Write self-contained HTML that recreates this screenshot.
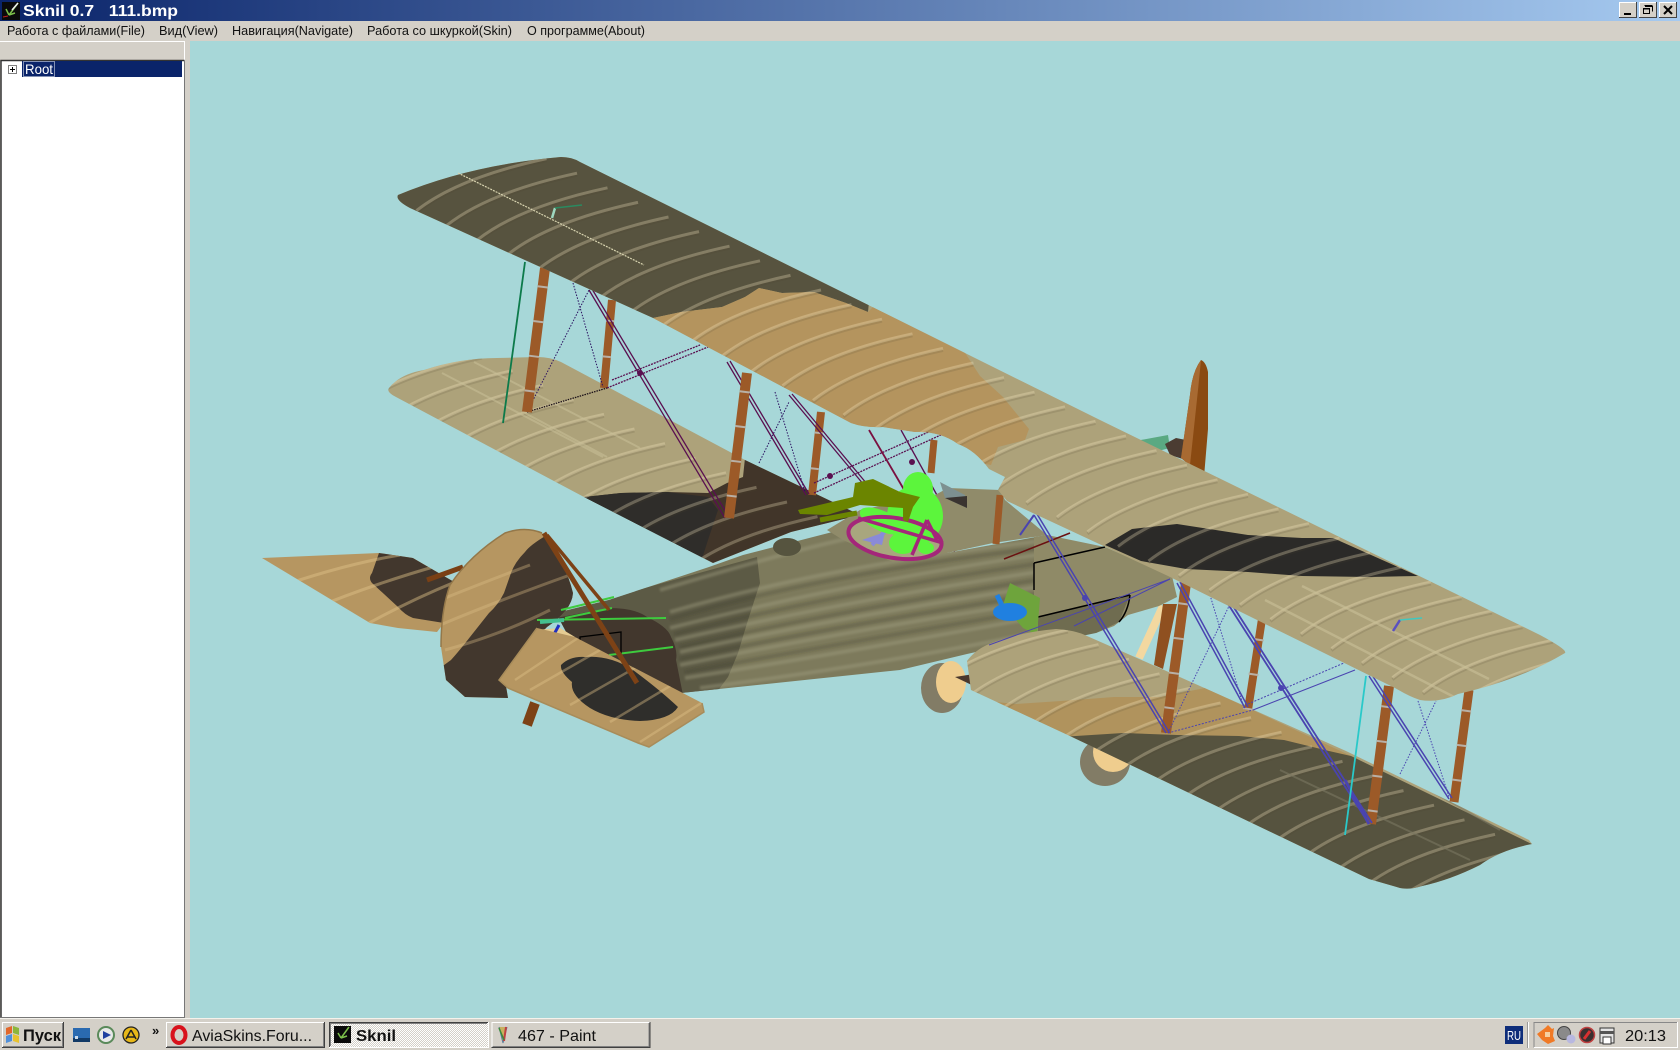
<!DOCTYPE html>
<html><head><meta charset="utf-8"><title>Sknil</title>
<style>
html,body{margin:0;padding:0;width:1680px;height:1050px;overflow:hidden;background:#d4d0c8}
svg{display:block}
text{font-family:"Liberation Sans","Noto Sans CJK SC",sans-serif}
</style></head><body>
<svg xmlns="http://www.w3.org/2000/svg" width="1680" height="1050" viewBox="0 0 1680 1050">
<defs>
<linearGradient id="tb" x1="0" x2="1" y1="0" y2="0"><stop offset="0" stop-color="#0a246a"/><stop offset="1" stop-color="#a6caf0"/></linearGradient>
<pattern id="dith" width="2" height="2" patternUnits="userSpaceOnUse"><rect width="2" height="2" fill="#d4d0c8"/><rect width="1" height="1" fill="#fff"/><rect x="1" y="1" width="1" height="1" fill="#fff"/></pattern>
<filter id="soft" x="-5%" y="-5%" width="110%" height="110%"><feGaussianBlur stdDeviation="1"/></filter>
<path id="r" fill="none" d="M0 0Q42 -33 130 -52"/>
<g id="r4"><use href="#r"/><use href="#r" x="30.5" y="14.6"/><use href="#r" x="61" y="29.2"/><use href="#r" x="91.5" y="43.8"/></g>
<g id="r16"><use href="#r4"/><use href="#r4" x="122" y="58.4"/><use href="#r4" x="244" y="116.8"/><use href="#r4" x="366" y="175.2"/></g>
<g id="r20"><use href="#r16"/><use href="#r4" x="488" y="233.6"/></g>
<g id="r32"><use href="#r16"/><use href="#r16" x="488" y="233.6"/></g>
<clipPath id="ct"><path d="M398 195Q470 165 561 157Q572 157 580 162L1100 420L1540 635Q1568 650 1565 653Q1520 680 1458 694Q1440 703 1420 700Q1410 697 1395 688L1168 576L1007 501L998 490L1005 477L989 469Q975 450 958 444Q940 431 915 432L883 427Q865 428 851 423L653 318L410 208Q395 200 398 195Z"/></clipPath>
<clipPath id="cl"><path d="M389 388Q400 374 424 370Q460 358 497 358L538 357Q550 357 561 362L745 460L860 515L791 532L713 563L584 497L396 397Q386 392 389 388Z"/></clipPath>
<clipPath id="cr"><path d="M967 661Q975 650 989 644Q1020 632 1056 629Q1075 630 1087 636L1137 658L1346 751L1529 840L1532 844Q1500 850 1480 865Q1450 880 1422 886Q1410 890 1400 888L1369 879L1070 736L971 690Z"/></clipPath>
<clipPath id="cf"><path d="M556 613L609 600L709 567L743 555L848 528L880 555L947 553L1047 535L1060 540L1079 629L967 654L900 670L681 693L600 695Z"/></clipPath>
<clipPath id="crd"><path d="M441 647Q441 610 450 585Q470 555 505 533Q525 526 542 533Q565 560 573 593Q572 610 547 627L520 655L505 680L508 698L465 697L446 680Z"/></clipPath>
<clipPath id="cls"><path d="M262 558L379 553L413 558L456 583L444 623L437 632L398 628L370 623Z"/></clipPath>
<clipPath id="crs"><path d="M537 628L575 637L702 703L704 712L649 747L638 743L508 688L499 680Z"/></clipPath>
</defs>

<!-- window chrome -->
<rect width="1680" height="1050" fill="#d4d0c8"/>
<rect width="1680" height="21" fill="url(#tb)"/>
<rect x="190" y="41" width="1490" height="977" fill="#a7d7d8"/>

<!-- title icon -->
<rect x="2" y="2" width="18" height="18" fill="#0a0a0a"/>
<path d="M18 3L9 15M6 9L9 15M9 15L15 13" stroke="#7cc04a" stroke-width="1.5" fill="none"/><path d="M18 3L12 10" stroke="#eee" stroke-width="1.5"/><path d="M3 17L8 16" stroke="#c02020" stroke-width="1"/>
<text x="23" y="16" font-size="16" font-weight="700" fill="#fff" textLength="155" lengthAdjust="spacingAndGlyphs" xml:space="preserve">Sknil 0.7   111.bmp</text>

<!-- window buttons -->
<g>
<g id="wb"><rect x="1619" y="2" width="18" height="16" fill="#d4d0c8"/><path d="M1619.5 17V2.5H1636" stroke="#fff" fill="none"/><path d="M1619 17.5H1636.5V2" stroke="#444" fill="none"/></g>
<use href="#wb" x="20"/><use href="#wb" x="40"/>
<rect x="1624" y="13" width="7" height="2" fill="#000"/>
<path d="M1645 6.5h7.5v5M1644.5 5.5h8" stroke="#000" fill="none"/><rect x="1643.5" y="8.5" width="6" height="5" fill="none" stroke="#000"/><path d="M1643 9H1650" stroke="#000"/>
<path d="M1664 6L1672 14M1672 6L1664 14" stroke="#000" stroke-width="2"/>
</g>

<!-- menu -->
<g font-size="13" fill="#111">
<text x="7" y="35" textLength="138" lengthAdjust="spacingAndGlyphs">Работа с файлами(File)</text>
<text x="159" y="35" textLength="59" lengthAdjust="spacingAndGlyphs">Вид(View)</text>
<text x="232" y="35" textLength="121" lengthAdjust="spacingAndGlyphs">Навигация(Navigate)</text>
<text x="367" y="35" textLength="145" lengthAdjust="spacingAndGlyphs">Работа со шкуркой(Skin)</text>
<text x="527" y="35" textLength="118" lengthAdjust="spacingAndGlyphs">О программе(About)</text>
</g>

<!-- left panel -->
<path d="M0 41.5H184.5V60" stroke="#fff" fill="none"/>
<rect x="1" y="60" width="183" height="957" fill="#fff"/>
<path d="M1 1017V60.5H184.5" stroke="#333" stroke-width="1.5" fill="none"/>
<path d="M0 1017.5H184.5V61" stroke="#777" fill="none" stroke-width="1"/>
<rect x="22" y="61" width="160" height="16" fill="#0a246a"/>
<rect x="8.5" y="65.5" width="8" height="8" fill="#fff" stroke="#808080"/><path d="M10 69.5H15M12.5 67V72" stroke="#000"/>
<rect x="23.5" y="61.5" width="31" height="15" fill="none" stroke="#fff" stroke-dasharray="1 1"/>
<text x="25" y="74" font-size="14" fill="#fff" textLength="28" lengthAdjust="spacingAndGlyphs">Root</text>

<!-- left lower wing -->
<g clip-path="url(#cl)">
<rect x="370" y="340" width="520" height="240" fill="#ada27a"/>
<path d="M584 497L621 493L667 492L708 493L727 483L743 477L745 458L870 510L790 540L713 570Z" fill="#413529"/>
<path d="M584 497L621 493L667 492L708 497L718 510L708 540L700 565L713 570Z" fill="#2f2d2a"/>
<use href="#r16" x="352" y="410" stroke="#4a4030" stroke-opacity=".15" stroke-width="3"/>
<use href="#r4" x="840" y="643.6" stroke="#4a4030" stroke-opacity=".15" stroke-width="3"/>
<use href="#r16" x="352" y="408" stroke="#fff0c8" stroke-opacity=".28" stroke-width="3"/>
<use href="#r4" x="840" y="641.6" stroke="#fff0c8" stroke-opacity=".2" stroke-width="3"/>
<path d="M442 373L603 457M474 362L640 448M525 413L607 457" stroke="#c9bf98" stroke-opacity=".55" stroke-width="2" fill="none"/>
</g>

<!-- left struts back -->
<g fill="none">
<path d="M612 300L604 388" stroke="#9c5a28" stroke-width="8"/>
<path d="M821 412L812 495" stroke="#9c5a28" stroke-width="8"/>
<path d="M934 440L931 473" stroke="#9c5a28" stroke-width="7"/>
<path d="M612 300L604 388M821 412L812 495" stroke="#b8b0a6" stroke-width="8" stroke-dasharray="2 34" stroke-dashoffset="-20"/>
</g>
<!-- left wires -->
<g fill="none" stroke="#5a1050" stroke-width="1.3">
<path d="M589 290L725 518M592 289L729 517"/>
<path d="M727 362L806 495M730 361L809 494"/>
<path d="M789 395L874 497M792 394L877 496"/>
<path d="M607 388L713 345M612 380L700 345" stroke-dasharray="2 1"/>
<path d="M814 493L956 428M814 483L933 430" stroke-dasharray="2 1"/>
<path d="M527 412L607 388" stroke="#1a1018" stroke-dasharray="1.5 1"/>
<path d="M527 412L589 290M573 283L603 387M759 463L789 402M775 392L805 492" stroke-width="1" stroke-dasharray="1.5 1.5" stroke="#2a1060"/>
<path d="M869 430L906 493" stroke="#7a1040" stroke-width="1.8"/>
<path d="M901 430L938 497"/>
<path d="M920 500L940 530L960 560"/>
</g>
<circle cx="640" cy="373" r="3" fill="#5a1050"/><circle cx="830" cy="476" r="3" fill="#5a1050"/><circle cx="912" cy="462" r="3" fill="#5a1050"/>
<g fill="none">
<path d="M545 268L527 412" stroke="#9c5a28" stroke-width="10"/>
<path d="M747 373L729 518" stroke="#9c5a28" stroke-width="10"/>
<path d="M545 268L527 412M747 373L729 518" stroke="#b8b0a6" stroke-width="10" stroke-dasharray="2 33" stroke-dashoffset="-18"/>
<path d="M525 262L503 423" stroke="#0c7a4a" stroke-width="1.8"/>
</g>

<!-- propeller / engine -->
<path d="M1130 442L1168 435L1170 448L1150 453Z" fill="#5aa982"/>
<path d="M1165 444L1176 438L1186 440L1186 460L1170 455Z" fill="#4b3c32"/>
<path d="M1201 360Q1192 372 1190 395L1181 458L1204 477L1208 429L1208 372Q1206 362 1201 360Z" fill="#8a4a12"/>
<path d="M1201 360Q1192 372 1190 395L1181 458L1190 465L1198 390Z" fill="#a86a32"/>

<!-- gear -->
<path d="M1163 606L1139 658" stroke="#f3d8a0" stroke-width="8"/>
<path d="M1163 604L1154 665L1163 669L1177 604Z" fill="#8f5020"/>

<!-- wheels -->
<ellipse cx="942" cy="688" rx="21" ry="25" fill="#827c66"/>
<ellipse cx="951" cy="682" rx="15" ry="21" fill="#efcd8e"/>
<path d="M955 677L980 673L978 688Z" fill="#4a382c"/>
<ellipse cx="1105" cy="762" rx="25" ry="24" fill="#827c66"/>
<ellipse cx="1113" cy="752" rx="20" ry="20" fill="#efcd8e"/>

<!-- left stab -->
<g clip-path="url(#cls)">
<rect x="255" y="545" width="210" height="95" fill="#b69661"/>
<path d="M379 553Q400 552 413 558L456 583L444 623L413 618Q405 615 398 607L372 583Q368 578 372 573Z" fill="#42372d"/>
<path d="M270 590Q340 565 400 555M310 610Q370 585 440 565M360 628Q410 600 460 580" stroke="#e0c48a" stroke-opacity=".45" stroke-width="3" fill="none"/>
</g>
<path d="M463 567L427 580" stroke="#7a4015" stroke-width="5"/>

<!-- fuselage -->
<g clip-path="url(#cf)">
<rect x="540" y="520" width="560" height="190" fill="#7d7a5c"/>
<path d="M540 600L609 598L757 557L760 583L748 620L738 653L728 677L714 696L540 700Z" fill="#5c5a45"/>
<g fill="none" filter="url(#soft)">
<g stroke="#a3a183" stroke-opacity=".4" stroke-width="4">
<path d="M660 590Q800 548 860 536"/><path d="M670 612Q830 565 1050 540"/><path d="M670 628Q850 582 1050 553"/><path d="M675 640Q850 600 1050 570"/><path d="M680 652Q850 615 1050 585"/><path d="M680 665Q850 630 1050 600"/><path d="M685 678Q860 650 1050 615"/><path d="M700 688Q880 665 1050 630"/>
</g>
<g stroke="#3a382a" stroke-opacity=".22" stroke-width="4">
<path d="M670 619Q830 572 1050 547"/><path d="M675 634Q850 590 1050 562"/><path d="M680 647Q850 608 1050 578"/><path d="M680 659Q850 623 1050 593"/><path d="M685 672Q860 640 1050 608"/>
</g>
</g>
<path d="M545 620L609 608Q635 608 647 617Q668 627 671 637Q678 650 676 660L683 695L540 700Z" fill="#42372d"/>
</g>
<!-- cockpit deck / nose -->
<path d="M827 530L860 510L935 495L948 488L1000 490L1005 500L1047 535L993 543L947 553L893 562L843 540Z" fill="#908b6a"/>
<path d="M1034 537L1047 535L1105 547L1172 576L1177 597L1159 606L1128 615L1114 626L1096 633L1079 629L1034 640Z" fill="#8f8a67"/>
<path d="M1038 617L1130 595L1119 622L1096 633L1038 645Z" fill="#6f6c50"/>
<path d="M1034 563L1105 547M1034 563V590M1038 617L1130 595M1130 595Q1128 612 1119 622" stroke="#000" stroke-width="1.5" fill="none"/>
<path d="M1004 559L1070 533" stroke="#6a1010" stroke-width="1.5"/>
<ellipse cx="787" cy="547" rx="14" ry="9" fill="#56543f"/>

<!-- blue/green markers -->
<path d="M1010 583L1040 598L1037 635L1023 628L1003 605Z" fill="#6ea43c"/>
<path d="M997 595L1005 612" stroke="#2080e0" stroke-width="5"/>
<ellipse cx="1010" cy="612" rx="17" ry="9" fill="#2080e0"/>

<!-- rudder -->
<g clip-path="url(#crd)">
<rect x="435" y="525" width="145" height="180" fill="#b69661"/>
<path d="M547 535Q530 545 525 552Q515 562 511 573L504 593Q498 605 489 613L470 637Q460 650 451 660L440 668V700H520L580 600L560 535Z" fill="#42372d"/>
<path d="M440 625Q500 600 570 575M440 600Q490 580 530 565M445 650Q500 635 550 610" stroke="#e0c48a" stroke-opacity=".35" stroke-width="3" fill="none"/>
</g>
<path d="M441 647Q441 610 450 585Q470 555 505 533Q525 526 542 533" stroke="#94784a" stroke-width="1.5" fill="none"/>

<!-- tail green lines, box -->
<g fill="none">
<path d="M561 610L614 597M565 618L612 608" stroke="#3ecb3e" stroke-width="2"/>
<path d="M537 620L666 618" stroke="#3ecb3e" stroke-width="2"/>
<path d="M540 622L564 620" stroke="#44c090" stroke-width="4"/>
<path d="M609 655L673 647" stroke="#3ecb3e" stroke-width="2"/>
<path d="M580 641V637L621 632V660" stroke="#000" stroke-width="1.3"/>
</g>
<path d="M535 630L560 628L575 637L545 645Z" fill="#e6cc92"/>
<path d="M559 625L551 640" stroke="#2030c0" stroke-width="3"/>

<!-- right stab -->
<g clip-path="url(#crs)">
<rect x="490" y="620" width="220" height="130" fill="#b69661"/>
<path d="M585 657Q610 655 633 670Q660 690 678 707Q670 720 640 721Q610 720 590 708Q570 695 572 682Q560 672 561 665Q570 656 585 657Z" fill="#2f2e2b"/>
<path d="M515 680L578 638M530 690L600 650M570 705L640 665M610 722L680 680M640 742L706 700" stroke="#e0c48a" stroke-opacity=".4" stroke-width="2.5" fill="none"/>
</g>
<path d="M537 628L499 680L508 688L638 743L649 747L704 712L702 703" stroke="#a88c5a" stroke-width="1.5" fill="none"/>
<path d="M544 533L637 683" stroke="#7d4216" stroke-width="5"/>
<path d="M547 535L609 610" stroke="#7d4216" stroke-width="3.5"/>
<path d="M535 703L527 725" stroke="#7d4216" stroke-width="10"/>

<!-- pilot & gun -->
<ellipse cx="895" cy="538" rx="47" ry="20" transform="rotate(9 895 538)" fill="#a8a67e"/>
<path d="M862 540L885 532L882 545Z" fill="#8a8ad8"/>
<path d="M872 545L888 528" stroke="#8a8ad8" stroke-width="4"/>
<ellipse cx="918" cy="489" rx="15" ry="17" fill="#5cf53c"/>
<ellipse cx="915" cy="516" rx="28" ry="30" fill="#5cf53c"/>
<ellipse cx="903" cy="543" rx="14" ry="11" fill="#5cf53c"/>
<ellipse cx="882" cy="521" rx="24" ry="10" fill="#5cf53c" transform="rotate(25 882 521)"/>
<ellipse cx="926" cy="548" rx="8" ry="6" fill="#5cf53c"/>
<ellipse cx="895" cy="538" rx="47" ry="20" transform="rotate(9 895 538)" fill="none" stroke="#a4267a" stroke-width="4"/>
<path d="M858 518L943 543M927 520L912 555M927 520L937 540" stroke="#a4267a" stroke-width="3.5" fill="none"/>
<path d="M798 510L853 497L855 483L873 479L900 492L920 497L913 507L908 522L903 520L903 508L860 505L827 515L800 514Z" fill="#6b8500"/>
<path d="M820 520L857 513" stroke="#6b8500" stroke-width="5"/>
<path d="M940 482L965 495L967 508L945 498Z" fill="#7d9090"/>
<path d="M945 498L967 496L967 508Z" fill="#3a3430"/>

<!-- right lower wing -->
<g clip-path="url(#cr)">
<rect x="960" y="620" width="580" height="280" fill="#ada27a"/>
<path d="M985 701L1016 704L1061 701L1114 697L1160 697L1205 688L1360 760L1060 740L990 705Z" fill="#b0935d"/>
<path d="M1060 737L1123 733L1177 735L1239 736L1284 740L1329 751L1351 756L1540 848L1480 900L1380 900Z" fill="#56533f"/>
<use href="#r20" x="938" y="684" stroke="#4a4030" stroke-opacity=".15" stroke-width="3"/>
<use href="#r20" x="938" y="682" stroke="#fff0c8" stroke-opacity=".28" stroke-width="3"/>
<path d="M1280 770L1470 860M1350 745L1500 830" stroke="#7a7660" stroke-opacity=".6" stroke-width="2" fill="none"/>
</g>

<!-- right struts -->
<g fill="none">
<path d="M1000 495L996 544" stroke="#9c5a28" stroke-width="7"/>
<path d="M1186 583L1166 733" stroke="#9c5a28" stroke-width="10"/>
<path d="M1262 619L1248 710" stroke="#9c5a28" stroke-width="8"/>
<path d="M1389 686L1371 824" stroke="#9c5a28" stroke-width="10"/>
<path d="M1469 690L1454 802" stroke="#9c5a28" stroke-width="9"/>
<path d="M1186 583L1166 733M1262 619L1248 710M1389 686L1371 824M1469 690L1454 802" stroke="#b8b0a6" stroke-width="10" stroke-dasharray="2 33" stroke-dashoffset="-20"/>
</g>
<!-- right wires -->
<g fill="none" stroke="#4a44b0" stroke-width="1.5">
<path d="M1034 515L1166 733M1037 514L1169 732"/>
<path d="M1177 583L1245 708M1180 582L1248 707"/>
<path d="M1228 604L1369 824M1231 603L1372 823" stroke-width="1.8"/>
<path d="M1345 780L1369 824" stroke-width="3"/>
<path d="M1369 676L1449 799M1372 675L1452 798"/>
<path d="M1168 733L1253 710" stroke-dasharray="2 1.5" stroke-width="1"/>
<path d="M1168 733L1230 604M1210 595L1244 708M1400 774L1436 701M1418 701L1449 797" stroke-dasharray="1.5 1.5" stroke-width="1"/>
<path d="M1253 710L1355 670" stroke-width="1"/>
<path d="M1248 704L1344 663" stroke-dasharray="2 1.5" stroke-width="1"/>
<path d="M989 645L1170 579M1074 626L1170 579" stroke-width="1"/>
<path d="M1034 515L1020 535" stroke-width="2"/>
</g>
<circle cx="1085" cy="598" r="3" fill="#4a44b0"/><circle cx="1281" cy="688" r="3" fill="#4a44b0"/>
<path d="M1366 676L1345 835" stroke="#29c9c9" stroke-width="1.8"/>

<!-- top wing -->
<g clip-path="url(#ct)">
<rect x="380" y="140" width="1200" height="580" fill="#ada27a"/>
<path d="M380 140H885L868 312L846 303L814 292L782 293L759 288L745 297L722 307L681 312L653 318L380 200Z" fill="#57533f"/>
<path d="M868 312L846 303L814 292L782 293L759 288L745 297L722 307L681 312L653 318L660 330L860 440L991 465L998 447L1025 440L1029 429L1003 397L980 376L960 345L880 300Z" fill="#b4945e"/>
<path d="M1105 545L1132 529L1177 524L1248 535L1302 538L1333 538L1418 576L1369 577L1302 576L1248 572L1186 569L1141 561Z" fill="#2b2a28"/>
<use href="#r32" x="386" y="198" stroke="#4a4030" stroke-opacity=".15" stroke-width="3"/>
<use href="#r4" x="1362" y="665" stroke="#4a4030" stroke-opacity=".15" stroke-width="3"/>
<use href="#r32" x="386" y="196" stroke="#fff0c8" stroke-opacity=".28" stroke-width="3"/>
<use href="#r4" x="1362" y="663" stroke="#fff0c8" stroke-opacity=".28" stroke-width="3"/>
<path d="M1302 586L1489 679M1265 600L1460 700" stroke="#c9bf98" stroke-opacity=".6" stroke-width="2.5" fill="none"/>
</g>
<path d="M458 173L644 265" stroke="#d8d4b0" stroke-width="1.2" stroke-dasharray="2 1"/>
<path d="M552 218L555 208" stroke="#9fd8c0" stroke-width="2.5"/><path d="M555 208L582 205" stroke="#2a8a60" stroke-width="1.5"/>
<path d="M1393 631L1400 620" stroke="#5a50c0" stroke-width="2.5"/><path d="M1400 620L1422 618" stroke="#40c8c0" stroke-width="1.5"/>

<!-- taskbar -->
<rect x="0" y="1018" width="1680" height="32" fill="#d4d0c8"/>
<path d="M0 1018.5H1680" stroke="#f4f2ec"/>
<path d="M2.5 1047V1022.5H63" stroke="#fff" fill="none"/><path d="M2 1047.5H63.5V1022" stroke="#404040" fill="none"/><path d="M3 1046.5H62.5V1023" stroke="#808080" fill="none"/>
<g><path d="M6 1028L12 1026V1033L6 1035Z" fill="#e2672a"/><path d="M13 1026L19 1028V1035L13 1033Z" fill="#8cb63c"/><path d="M6 1036L12 1034V1041L6 1043Z" fill="#4f8fd9"/><path d="M13 1034L19 1036V1043L13 1041Z" fill="#e8c22e"/></g>
<text x="23" y="1041" font-size="17" font-weight="700" fill="#111" textLength="38" lengthAdjust="spacingAndGlyphs">Пуск</text>

<rect x="73" y="1028" width="17" height="14" fill="#2a6ab0"/><rect x="73" y="1038" width="17" height="4" fill="#123a66"/><rect x="75" y="1036" width="3" height="3" fill="#cde"/>
<circle cx="106" cy="1035" r="8" fill="#e8e8e8" stroke="#5a8a5a" stroke-width="2"/><path d="M103 1031L111 1035L103 1039Z" fill="#2040a0"/>
<circle cx="131" cy="1035" r="8" fill="#e8b818" stroke="#222" stroke-width="1.3"/><path d="M131 1030L126 1039M131 1030L136 1039M127 1037H135" stroke="#222" stroke-width="1.5" fill="none"/>
<text x="152" y="1035" font-size="13" font-weight="700" fill="#111">»</text>

<g id="tbtn"><path d="M166.5 1047V1022.5H324" stroke="#fff" fill="none"/><path d="M166 1047.5H324.5V1022" stroke="#404040" fill="none"/><path d="M167 1046.5H323.5V1023" stroke="#808080" fill="none"/></g>
<ellipse cx="179" cy="1035" rx="6.5" ry="8" fill="none" stroke="#d8121c" stroke-width="4"/>
<text x="192" y="1041" font-size="16" fill="#111" textLength="120" lengthAdjust="spacingAndGlyphs">AviaSkins.Foru...</text>

<rect x="329" y="1022" width="159" height="26" fill="url(#dith)"/><path d="M329.5 1047V1022.5H488" stroke="#404040" fill="none"/><path d="M330.5 1046V1023.5H487" stroke="#808080" fill="none"/><path d="M329 1047.5H488.5V1022" stroke="#fff" fill="none"/>
<rect x="334" y="1026" width="17" height="17" fill="#0a0a0a"/><path d="M349 1027L341 1038M338 1033L341 1038M341 1038L347 1036" stroke="#7cc04a" stroke-width="1.5" fill="none"/>
<text x="356" y="1041" font-size="16" font-weight="700" fill="#111" textLength="40" lengthAdjust="spacingAndGlyphs">Sknil</text>

<use href="#tbtn" x="325.5"/>
<path d="M499 1027L503 1043L507 1027" fill="#c8b060" stroke="#5a7a9a"/><path d="M506 1027L504 1041" stroke="#c04040" stroke-width="2"/><path d="M499 1028L504 1040" stroke="#3a8a3a" stroke-width="1.5"/>
<text x="518" y="1041" font-size="16" fill="#111" textLength="78" lengthAdjust="spacingAndGlyphs">467 - Paint</text>

<!-- tray -->
<rect x="1505" y="1026" width="18" height="18" fill="#0e2d7a"/>
<text x="1507" y="1040" font-size="13" fill="#fff" textLength="14" lengthAdjust="spacingAndGlyphs">RU</text>
<path d="M1527.5 1022V1048" stroke="#999"/><path d="M1528.5 1022V1048" stroke="#fff"/>
<path d="M1534 1047.5V1022.5H1677" stroke="#888" fill="none"/><path d="M1534 1047.5H1677.5V1022" stroke="#fff" fill="none"/>
<path d="M1537 1034L1545 1028L1548 1025L1552 1029L1554 1028L1553 1036L1555 1041L1548 1044L1542 1040Z" fill="#f07a26"/><rect x="1545" y="1032" width="5" height="5" fill="#f6d0a0"/>
<circle cx="1564" cy="1033" r="6.5" fill="#8a8a8a" stroke="#444"/><circle cx="1571" cy="1039" r="4.5" fill="#b8b8e0"/>
<circle cx="1587" cy="1035" r="7.5" fill="#3a3030" stroke="#c04040" stroke-width="1.5"/><path d="M1584 1039L1590 1031" stroke="#d83030" stroke-width="3"/>
<rect x="1600" y="1028" width="14" height="15" fill="#e4e4e4" stroke="#333"/><rect x="1603" y="1037" width="8" height="7" fill="#fff" stroke="#333"/><rect x="1600" y="1031" width="14" height="3" fill="#555"/>
<text x="1625" y="1041" font-size="16" fill="#111" textLength="41" lengthAdjust="spacingAndGlyphs">20:13</text>
</svg>
</body></html>
